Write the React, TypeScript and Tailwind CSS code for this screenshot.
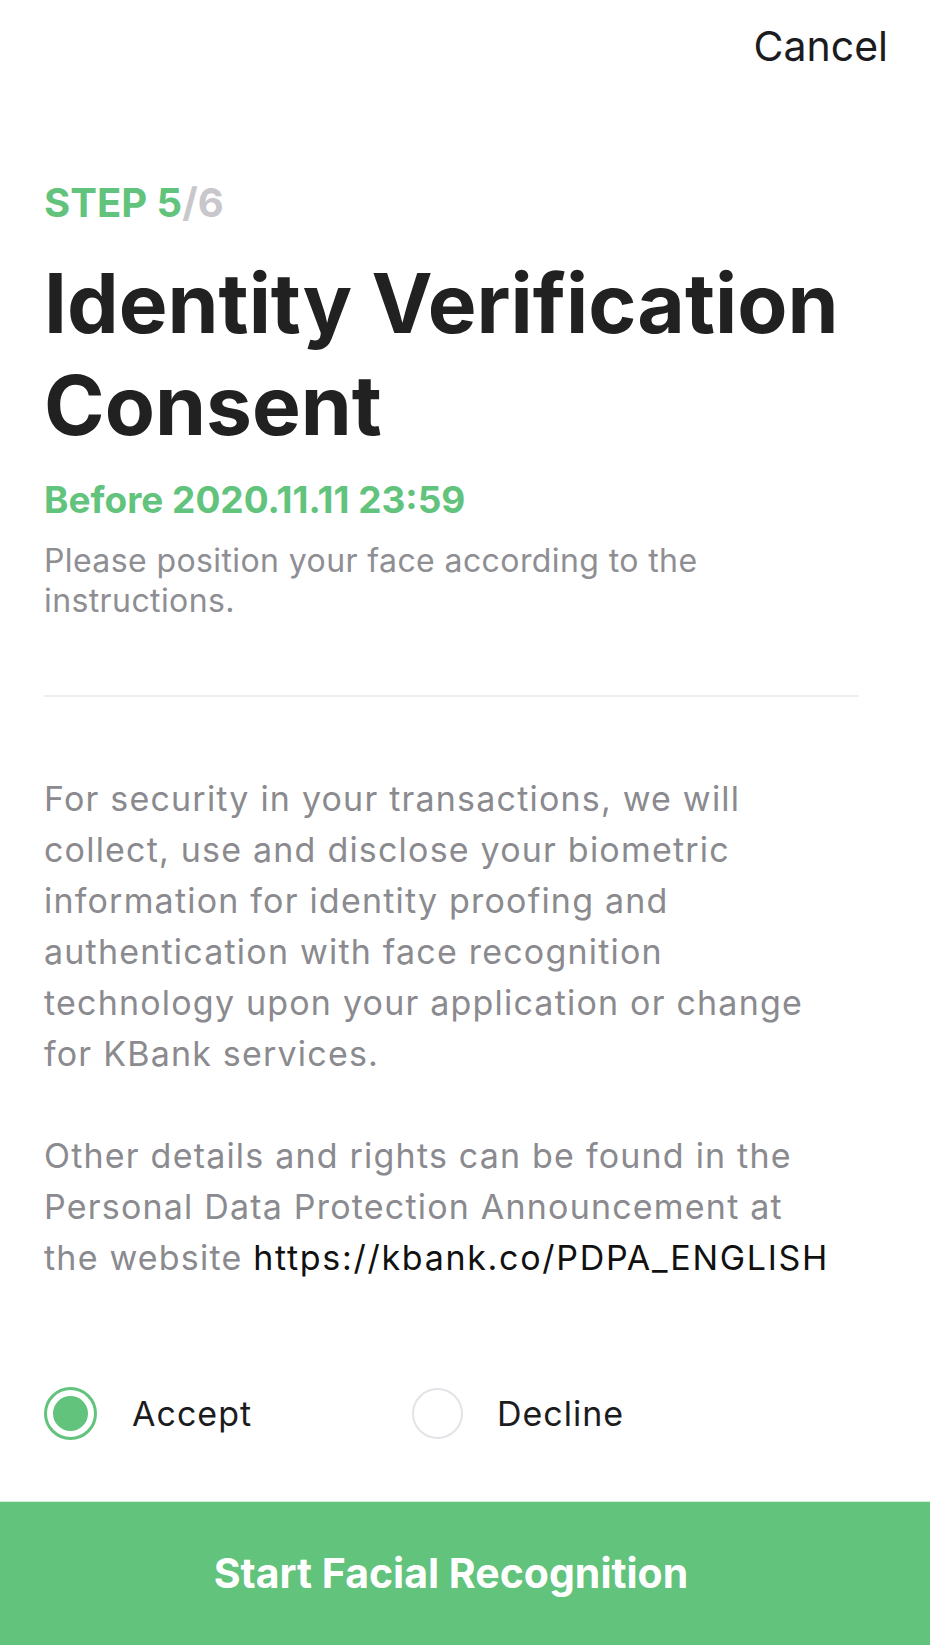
export default function App() {
  return (
    <div className="w-[930px] h-[1645px] bg-white flex flex-col font-['Inter','Noto_Sans',sans-serif]">
      <div className="flex justify-end pt-[21px] pr-[42px]">
        <button className="text-[41px] leading-[50px] text-[#1c1c1e]">Cancel</button>
      </div>

      <div className="pl-[44px] pr-[71px]">
        <div className="mt-[108px] text-[40px] leading-[48px] font-bold">
          <span className="text-[#62c37c]">STEP 5</span>
          <span className="text-[#c7c7cc]">/6</span>
        </div>
        <h1 className="mt-[26px] text-[82px] leading-[102px] font-bold text-[#212121]">
          Identity Verification Consent
        </h1>
        <p className="mt-[21px] text-[37px] leading-[44px] font-bold text-[#62c37c]">
          Before 2020.11.11 23:59
        </p>
        <p className="mt-[19px] text-[32px] leading-[40px] tracking-[0.4px] text-[#8e8e93]">
          Please position your face according to the instructions.
        </p>

        <div className="mt-[74px] h-[2px] bg-[#efefef]" />

        <div className="mt-[76px] pr-[20px] text-[34px] leading-[51px] tracking-[1.2px] text-[#8a8a8f]">
          <p>
            For security in your transactions, we will collect, use and disclose your biometric
            information for identity proofing and authentication with face recognition technology
            upon your application or change for KBank services.
          </p>
          <p className="mt-[51px]">
            Other details and rights can be found in the Personal Data Protection Announcement at
            the website <span className="tracking-[1.7px] text-[#111111]">https://kbank.co/PDPA_ENGLISH</span>
          </p>
        </div>

        <div className="mt-[104px] flex items-center">
          <label className="w-[368px] flex items-center gap-[35px]">
            <span className="w-[53px] h-[53px] rounded-full border-[3px] border-[#62c37c] flex items-center justify-center">
              <span className="w-[35px] h-[35px] rounded-full bg-[#62c37c]" />
            </span>
            <span className="text-[34px] tracking-[1px] text-[#1c1c1e]">Accept</span>
          </label>
          <label className="flex items-center gap-[34px]">
            <span className="w-[51px] h-[51px] rounded-full border-2 border-[#e3e3e8]" />
            <span className="text-[34px] tracking-[1px] text-[#1c1c1e]">Decline</span>
          </label>
        </div>
      </div>

      <button className="mt-auto h-[144px] w-full bg-[#62c37c] border-t border-[#cfeed8] pr-[28px] text-white text-[41px] font-bold">
        Start Facial Recognition
      </button>
    </div>
  );
}
